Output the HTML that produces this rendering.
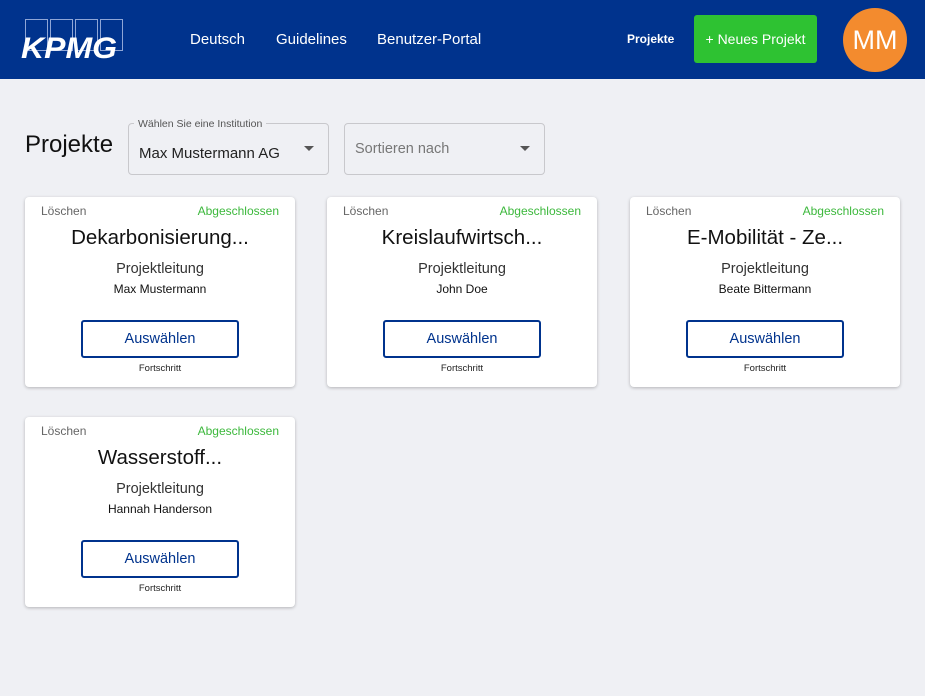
<!DOCTYPE html>
<html><head><meta charset="utf-8"><style>
*{margin:0;padding:0;box-sizing:border-box}
body{width:925px;height:696px;background:#eff0f4;font-family:"Liberation Sans",sans-serif;position:relative;overflow:hidden}
.hdr{position:absolute;left:0;top:0;width:925px;height:79px;background:#00338d}
.a{position:absolute;white-space:nowrap}
.nav{color:#fff;font-size:15px;top:31px}
.card{position:absolute;width:270px;height:190px;background:#fff;border-radius:4px;box-shadow:0 1px 3px rgba(0,0,0,.25)}
.card .l{position:absolute;left:16px;top:7px;font-size:12px;color:#666}
.card .r{position:absolute;right:16px;top:7px;font-size:12px;color:#3cb83c}
.card .t{position:absolute;left:0;width:100%;top:29px;text-align:center;font-size:20.5px;color:#111}
.card .p{position:absolute;left:0;width:100%;top:64px;text-align:center;font-size:14.5px;color:#333}
.card .n{position:absolute;left:0;width:100%;top:85px;text-align:center;font-size:12px;color:#111}
.card .b{position:absolute;left:56px;top:123px;width:158px;height:38px;border:2px solid #00338d;border-radius:3px;color:#00338d;text-align:center;line-height:34px;font-size:14.5px}
.card .f{position:absolute;left:0;width:100%;top:166px;text-align:center;font-size:9.5px;color:#222}
</style></head><body>
<div class="hdr"></div>
<svg class="a" style="left:20px;top:18px" width="106" height="42">
<g fill="none" stroke="#8fa6d6" stroke-width="1"><rect x="5.5" y="1.5" width="22" height="31"/><rect x="30.5" y="1.5" width="22" height="31"/><rect x="55.5" y="1.5" width="22" height="31"/><rect x="80.5" y="1.5" width="22" height="31"/></g>
<text x="1" y="40" fill="#fff" font-family="Liberation Sans" font-style="italic" font-weight="bold" font-size="30" textLength="96" lengthAdjust="spacingAndGlyphs">KPMG</text></svg>
<div class="a nav" style="left:190px">Deutsch</div>
<div class="a nav" style="left:276px">Guidelines</div>
<div class="a nav" style="left:377px">Benutzer-Portal</div>
<div class="a" style="left:627px;top:32px;color:#fff;font-size:12px;font-weight:bold">Projekte</div>
<div class="a" style="left:694px;top:15px;width:123px;height:48px;background:#2ec232;border-radius:3px;color:#fff;font-size:14px;text-align:center;line-height:48px">+ Neues Projekt</div>
<div class="a" style="left:843px;top:8px;width:64px;height:64px;border-radius:50%;background:#f38b2e;color:#fff;font-size:27px;text-align:center;line-height:64px">MM</div>

<div class="a" style="left:25px;top:131px;font-size:24px;color:#111">Projekte</div>
<div class="a" style="left:128px;top:123px;width:201px;height:52px;border:1px solid #c8c8cc;border-radius:4px"></div>
<div class="a" style="left:134px;top:118px;background:#eff0f4;padding:0 4px;font-size:10.5px;color:#555">Wählen Sie eine Institution</div>
<div class="a" style="left:139px;top:145px;font-size:15px;color:#222">Max Mustermann AG</div>
<div class="a" style="left:304px;top:146px;width:0;height:0;border-left:5px solid transparent;border-right:5px solid transparent;border-top:5px solid #555"></div>
<div class="a" style="left:344px;top:123px;width:201px;height:52px;border:1px solid #c8c8cc;border-radius:4px"></div>
<div class="a" style="left:355px;top:141px;font-size:14.5px;color:#777">Sortieren nach</div>
<div class="a" style="left:520px;top:146px;width:0;height:0;border-left:5px solid transparent;border-right:5px solid transparent;border-top:5px solid #555"></div>

<div class="card" style="left:25px;top:197px"><div class="l">Löschen</div><div class="r">Abgeschlossen</div><div class="t">Dekarbonisierung...</div><div class="p">Projektleitung</div><div class="n">Max Mustermann</div><div class="b">Auswählen</div><div class="f">Fortschritt</div></div>
<div class="card" style="left:327px;top:197px"><div class="l">Löschen</div><div class="r">Abgeschlossen</div><div class="t">Kreislaufwirtsch...</div><div class="p">Projektleitung</div><div class="n">John Doe</div><div class="b">Auswählen</div><div class="f">Fortschritt</div></div>
<div class="card" style="left:630px;top:197px"><div class="l">Löschen</div><div class="r">Abgeschlossen</div><div class="t">E-Mobilität - Ze...</div><div class="p">Projektleitung</div><div class="n">Beate Bittermann</div><div class="b">Auswählen</div><div class="f">Fortschritt</div></div>
<div class="card" style="left:25px;top:417px"><div class="l">Löschen</div><div class="r">Abgeschlossen</div><div class="t">Wasserstoff...</div><div class="p">Projektleitung</div><div class="n">Hannah Handerson</div><div class="b">Auswählen</div><div class="f">Fortschritt</div></div>
</body></html>
